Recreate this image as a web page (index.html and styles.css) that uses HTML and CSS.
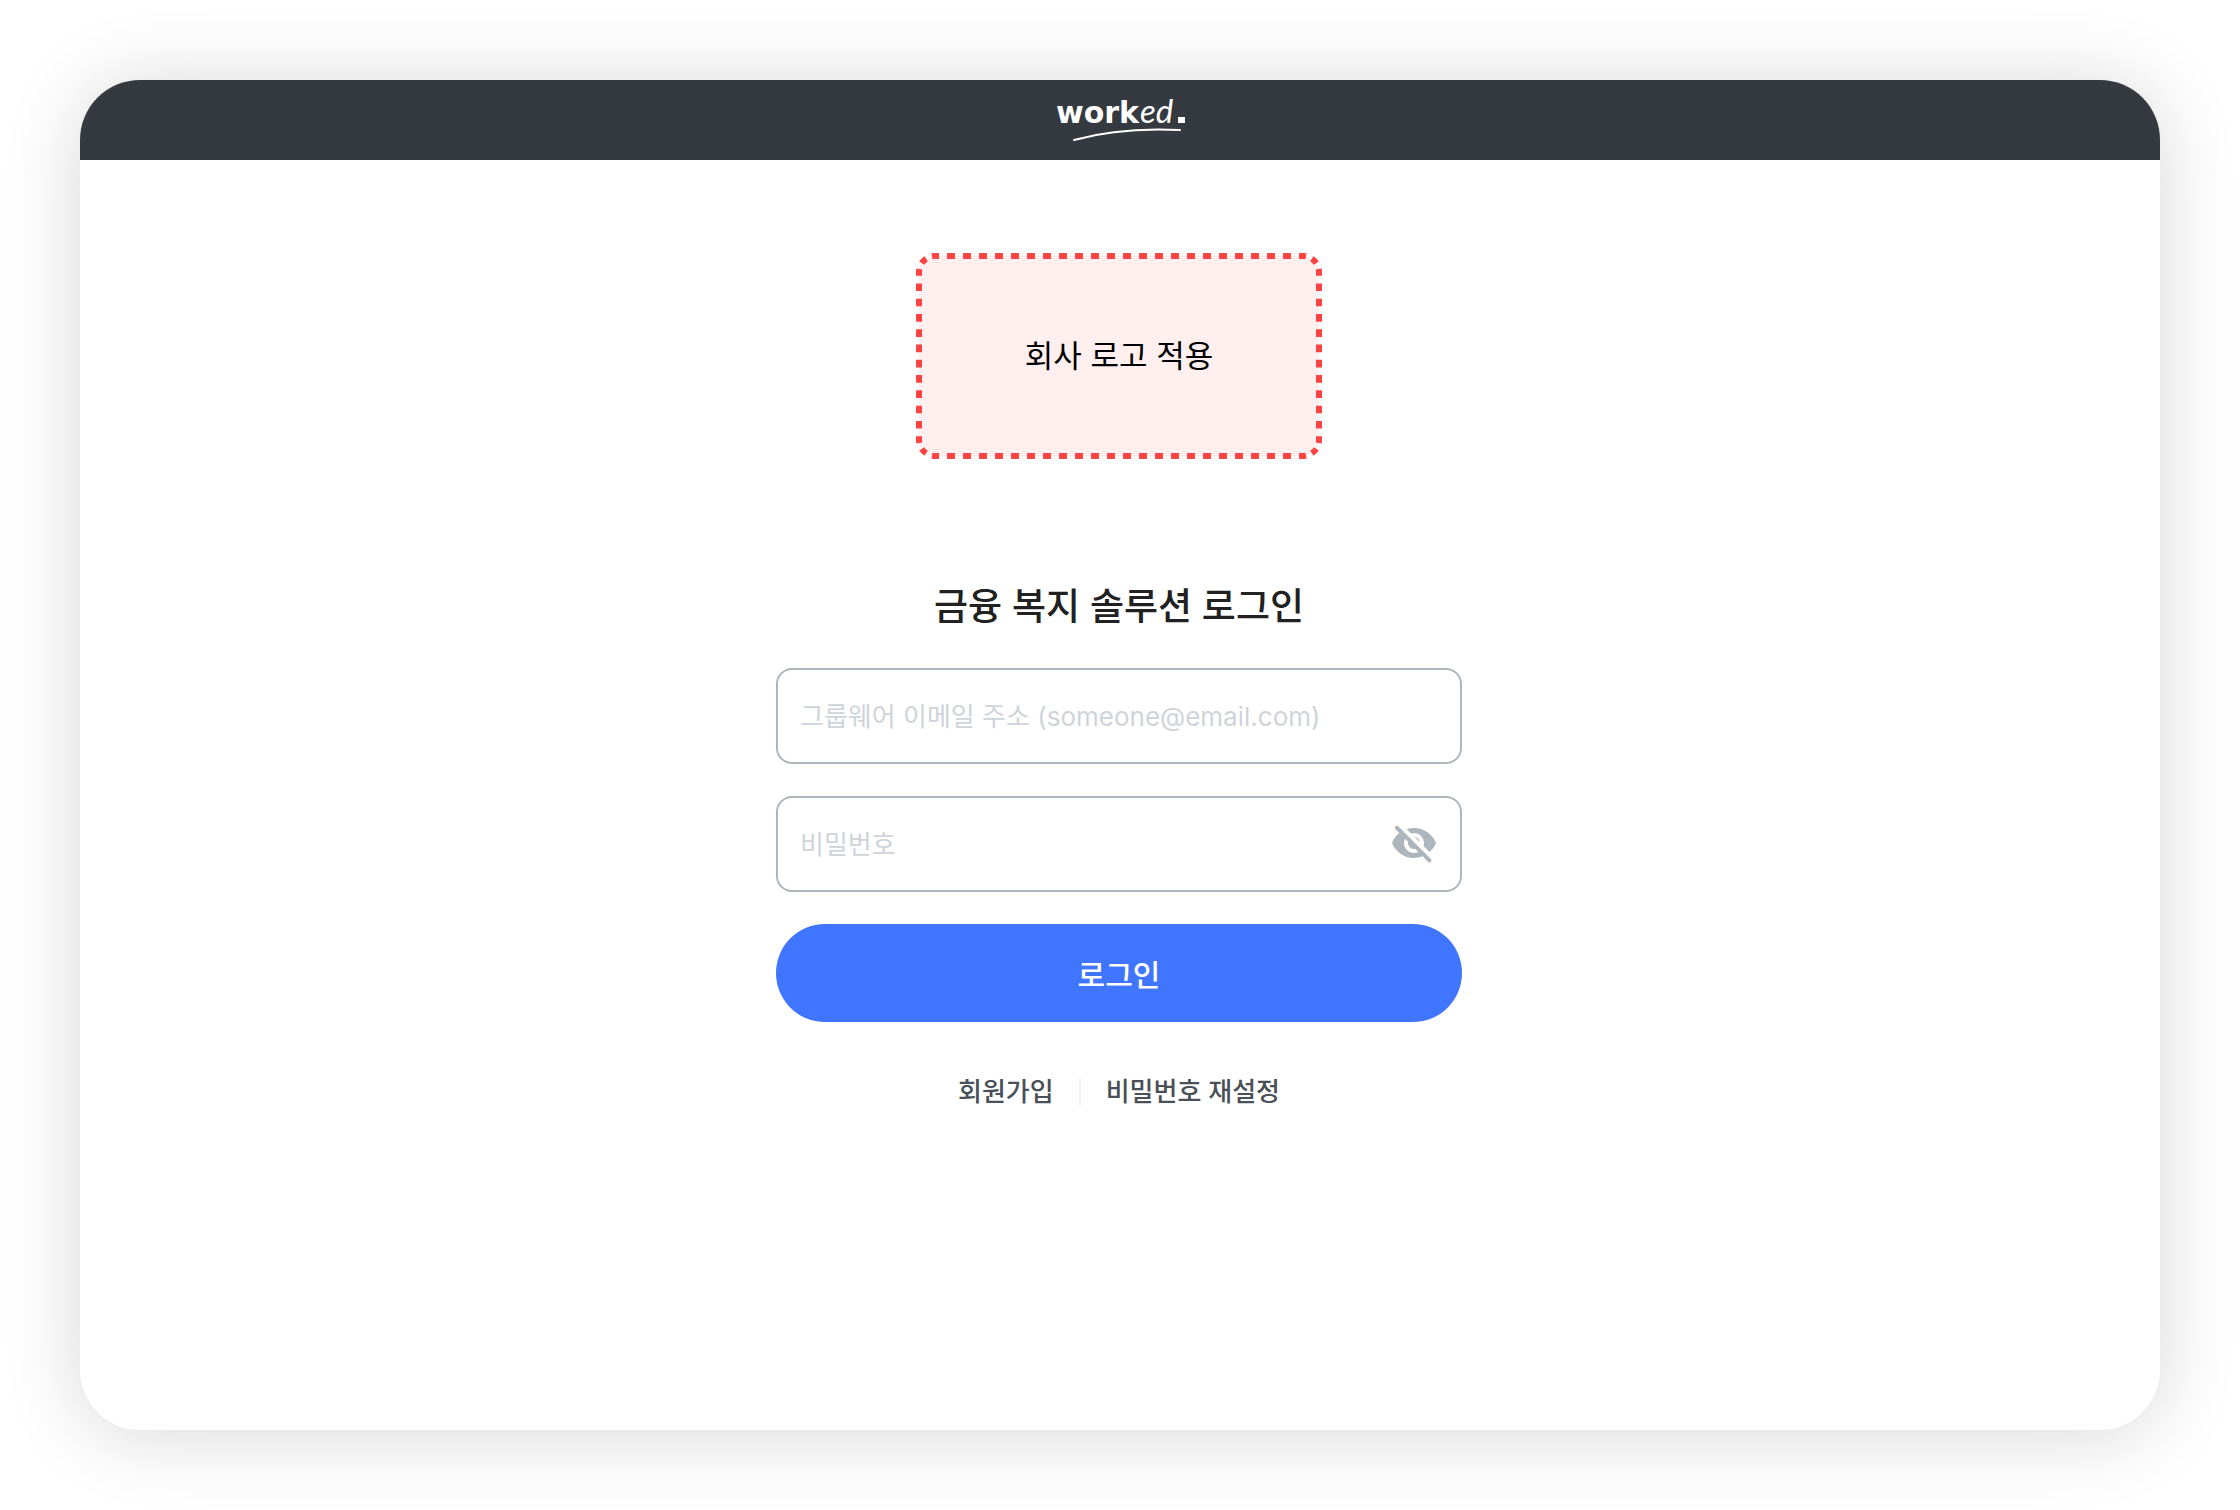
FILE: index.html
```html
<!DOCTYPE html>
<html lang="ko">
<head>
<meta charset="utf-8">
<meta name="viewport" content="width=device-width, initial-scale=1">
<title>금융 복지 솔루션 로그인</title>
<link rel="stylesheet" href="styles.css">
</head>
<body>
<div class="card">
  <header class="topbar">
    <svg class="brand" viewBox="0 0 136 80" role="img" aria-label="worked.">
      <text class="brand-bold" x="4" y="43">work</text>
      <text class="brand-script" x="88" y="43">ed</text>
      <rect x="126" y="37" width="7" height="6"/>
      <path class="brand-line" d="M22 60C54 51 88 48 128 50"/>
    </svg>
  </header>
  <main class="content">
    <div class="company-logo">
      <svg class="dashes" viewBox="-3 -3 406 206" aria-hidden="true">
        <path pathLength="368" d="M16 0H384"/>
        <path pathLength="368" d="M16 200H384"/>
        <path pathLength="176" d="M0 16V184"/>
        <path pathLength="176" d="M400 16V184"/>
        <path pathLength="32" d="M0 16A16 16 0 0 1 16 0"/>
        <path pathLength="32" d="M384 0A16 16 0 0 1 400 16"/>
        <path pathLength="32" d="M400 184A16 16 0 0 1 384 200"/>
        <path pathLength="32" d="M16 200A16 16 0 0 1 0 184"/>
      </svg>
      <span>회사 로고 적용</span>
    </div>
    <form class="login">
      <h1 class="title">금융 복지 솔루션 로그인</h1>
      <div class="field">
        <input class="field-input" type="email" aria-label="그룹웨어 이메일 주소" placeholder="그룹웨어 이메일 주소 (someone@email.com)">
      </div>
      <div class="field">
        <input class="field-input" type="password" aria-label="비밀번호" placeholder="비밀번호">
        <button class="reveal" type="button" aria-label="비밀번호 표시">
          <svg viewBox="0 0 24 24" width="48" height="48" aria-hidden="true"><path d="M12 6.5c2.76 0 5 2.24 5 5 0 .51-.1 1-.24 1.46l3.06 3.06c1.39-1.23 2.49-2.77 3.18-4.53C21.27 7.11 17 4 12 4c-1.27 0-2.49.2-3.64.57l2.17 2.17c.47-.14.96-.24 1.47-.24zM2.71 3.16c-.39.39-.39 1.02 0 1.41l1.97 1.97C3.06 7.83 1.77 9.53 1 11.5 2.73 15.89 7 19 12 19c1.52 0 2.97-.3 4.31-.82l2.72 2.72c.39.39 1.02.39 1.41 0 .39-.39.39-1.02 0-1.41L4.13 3.16c-.39-.39-1.03-.39-1.42 0zM12 16.5c-2.76 0-5-2.24-5-5 0-.77.18-1.5.49-2.14l1.57 1.57c-.03.18-.06.37-.06.57 0 1.66 1.34 3 3 3 .2 0 .38-.03.57-.07L14.14 16c-.65.32-1.37.5-2.14.5zm2.97-5.33c-.15-1.4-1.25-2.49-2.64-2.64l2.64 2.64z"/></svg>
        </button>
      </div>
      <button class="submit" type="submit">로그인</button>
    </form>
    <nav class="links">
      <a href="#signup">회원가입</a>
      <a href="#reset">비밀번호 재설정</a>
    </nav>
  </main>
</div>
</body>
</html>
```
FILE: styles.css
```css
* {
  box-sizing: border-box;
}

body {
  margin: 0;
  min-height: 100vh;
  padding: 80px;
  display: flex;
  background: #fff;
  font-family: Inter, "Noto Sans CJK KR", sans-serif;
  color: #212529;
}

.card {
  flex: 1;
  min-width: 0;
  border-radius: 60px;
  overflow: hidden;
  background: #fff;
  box-shadow: 0 4px 80px rgba(0, 0, 0, 0.16);
}

.topbar {
  height: 80px;
  display: flex;
  justify-content: center;
  align-items: center;
  background: #343a40;
}

.brand {
  width: 136px;
  height: 80px;
  fill: #fff;
}

.brand-bold {
  font: 700 30px "DejaVu Sans", sans-serif;
}

.brand-script {
  font: italic 400 33px Lato, sans-serif;
}

.brand-line {
  fill: none;
  stroke: #fff;
  stroke-width: 2;
  stroke-linecap: round;
}

.content {
  padding: 96px 26px 96px 24px;
  display: flex;
  flex-direction: column;
  align-items: center;
}

.company-logo {
  position: relative;
  width: 400px;
  height: 200px;
  max-width: 100%;
  padding-bottom: 4px;
  display: flex;
  justify-content: center;
  align-items: center;
  border-radius: 16px;
  background: #ffefef;
  color: #000;
  font: 400 31px/48px "Noto Sans CJK KR", sans-serif;
}

.dashes {
  position: absolute;
  inset: -3px;
  fill: none;
  stroke: #ff4242;
  stroke-width: 6;
  stroke-dasharray: 8 8;
  stroke-dashoffset: 4;
}

.login {
  width: 100%;
  max-width: 686px;
  margin-top: 122px;
  display: flex;
  flex-direction: column;
  gap: 32px;
}

.title {
  margin: 0;
  text-align: center;
  font-size: 37px;
  line-height: 58px;
  font-weight: 500;
  color: #212121;
}

.field {
  height: 96px;
  display: flex;
  align-items: center;
  padding: 0 22px;
  border: 2px solid #adb5bd;
  border-radius: 16px;
}

.field-input {
  flex: 1;
  min-width: 0;
  height: 100%;
  padding: 0;
  border: 0;
  outline: 0;
  background: none;
  font: inherit;
  font-size: 26px;
}

.field-input::placeholder {
  color: #ced4da;
}

.reveal {
  padding: 0;
  border: 0;
  background: none;
  cursor: pointer;
}

.reveal svg {
  display: block;
  fill: #adb5bd;
}

.submit {
  height: 98px;
  border: 0;
  border-radius: 49px;
  background: #4075ff;
  color: #fff;
  font: inherit;
  font-size: 30px;
  font-weight: 500;
  cursor: pointer;
}

.links {
  margin-top: 56px;
  display: flex;
  font-size: 26px;
  line-height: 28px;
  font-weight: 500;
}

.links a {
  padding: 0 25px;
  color: #495057;
  text-decoration: none;
}

.links a + a {
  border-left: 2px solid #f1f3f5;
}
```
